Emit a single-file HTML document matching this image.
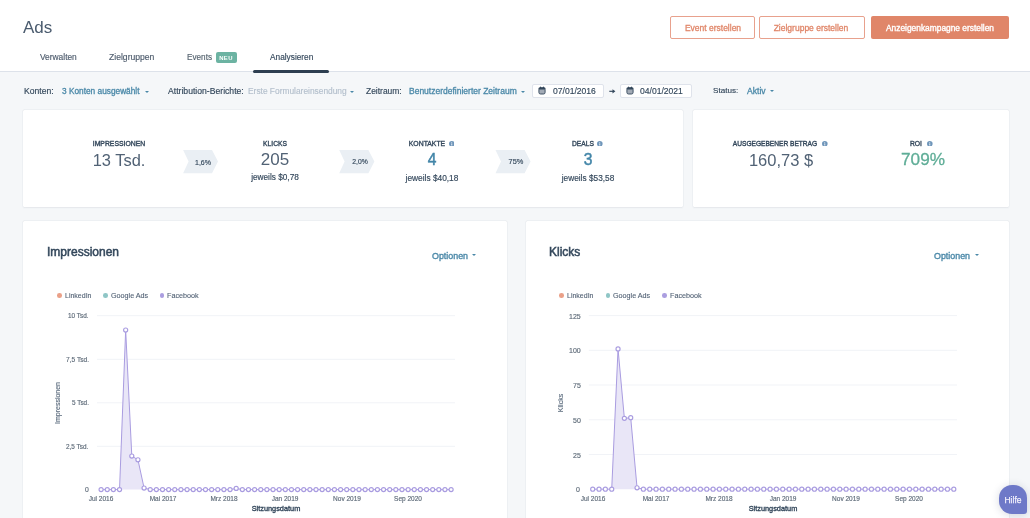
<!DOCTYPE html>
<html><head><meta charset='utf-8'><style>
html,body{margin:0;padding:0;}
body{width:1030px;height:518px;overflow:hidden;position:relative;background:#f5f7f9;font-family:"Liberation Sans",sans-serif;}
.t{position:absolute;line-height:1;white-space:nowrap;will-change:transform;}
.btn{position:absolute;top:16px;height:22.6px;box-sizing:border-box;border:1px solid #e8a18d;border-radius:2px;background:#fff;}
.caret{position:absolute;width:0;height:0;border-left:2.5px solid transparent;border-right:2.5px solid transparent;border-top:2.5px solid #4a88a8;}
.card{position:absolute;background:#fff;border-radius:1.5px;box-shadow:0 0 0 0.5px rgba(45,62,80,0.05),0 0.5px 2px rgba(45,62,80,0.06);}
#hdr{position:absolute;left:0;top:0;width:1030px;height:71px;background:#fff;border-bottom:1px solid #dde2ea;}
</style></head><body>
<div id='hdr'></div>
<div class='t' style='left:23.20px;top:18.58px;font-size:17px;color:#4a5b6e;font-weight:400;'>Ads</div>
<div class='t' style='left:39.60px;top:53.22px;font-size:8.4px;color:#4d5b6c;font-weight:400;-webkit-text-stroke:0.15px #4d5b6c;'>Verwalten</div>
<div class='t' style='left:108.50px;top:53.06px;font-size:8.6px;color:#4d5b6c;font-weight:400;-webkit-text-stroke:0.15px #4d5b6c;'>Zielgruppen</div>
<div class='t' style='left:186.50px;top:53.89px;font-size:8.2px;color:#55636f;font-weight:400;-webkit-text-stroke:0.15px #55636f;'>Events</div>
<div style='position:absolute;left:215.6px;top:52px;width:21.3px;height:11.3px;background:#6cb3a2;border-radius:2px'></div><div class='t' style='left:-73.60px;width:600px;text-align:center;top:55.60px;font-size:5.9px;color:#fff;font-weight:700;letter-spacing:0.35px;'>NEU</div>
<div class='t' style='left:269.60px;top:53.31px;font-size:8.3px;color:#33475b;font-weight:400;-webkit-text-stroke:0.15px #33475b;'>Analysieren</div>
<div style='position:absolute;left:253.2px;top:69.6px;width:76px;height:3px;background:#2d3e50;border-radius:2px'></div><div class='btn' style='left:670.3px;width:84.5px'></div><div class='btn' style='left:759.1px;width:105.5px'></div><div style='position:absolute;left:870.6px;top:16px;width:138.8px;height:22.7px;background:#e08669;border-radius:2px'></div><div class='t' style='left:412.60px;width:600px;text-align:center;top:23.54px;font-size:8.5px;color:#e08669;font-weight:400;-webkit-text-stroke:0.3px #e08669;'>Event erstellen</div>
<div class='t' style='left:511.40px;width:600px;text-align:center;top:23.54px;font-size:8.5px;color:#e08669;font-weight:400;-webkit-text-stroke:0.3px #e08669;'>Zielgruppe erstellen</div>
<div class='t' style='left:640.00px;width:600px;text-align:center;top:23.62px;font-size:8.4px;color:#fff;font-weight:400;-webkit-text-stroke:0.35px #fff;'>Anzeigenkampagne erstellen</div>
<div class='t' style='left:23.50px;top:86.86px;font-size:8.6px;color:#33475b;font-weight:400;-webkit-text-stroke:0.15px #33475b;'>Konten:</div>
<div class='t' style='left:61.50px;top:87.11px;font-size:8.3px;color:#4a88a8;font-weight:400;-webkit-text-stroke:0.3px #4a88a8;'>3 Konten ausgewählt</div>
<div class='caret' style='left:144.6px;top:90.6px;border-top-color:#4a88a8'></div><div class='t' style='left:167.60px;top:86.82px;font-size:8.65px;color:#33475b;font-weight:400;-webkit-text-stroke:0.15px #33475b;'>Attribution-Berichte:</div>
<div class='t' style='left:247.70px;top:87.02px;font-size:8.4px;color:#b3bfcc;font-weight:400;-webkit-text-stroke:0.15px #b3bfcc;'>Erste Formulareinsendung</div>
<div class='caret' style='left:349.8px;top:90.6px;border-top-color:#4a88a8'></div><div class='t' style='left:366.40px;top:86.97px;font-size:8.46px;color:#33475b;font-weight:400;-webkit-text-stroke:0.15px #33475b;'>Zeitraum:</div>
<div class='t' style='left:408.80px;top:86.94px;font-size:8.5px;color:#4a88a8;font-weight:400;-webkit-text-stroke:0.3px #4a88a8;'>Benutzerdefinierter Zeitraum</div>
<div class='caret' style='left:520.5px;top:90.6px;border-top-color:#4a88a8'></div><div style='position:absolute;left:532.1px;top:84.1px;width:72.3px;height:13.7px;box-sizing:border-box;background:#fff;border:1px solid #dfe3eb;border-radius:2px'></div><div class='t' style='left:552.60px;top:86.89px;font-size:8.56px;color:#33475b;font-weight:400;-webkit-text-stroke:0.15px #33475b;'>07/01/2016</div>
<svg style='position:absolute;left:538.0999999999999px;top:85.6px' width='9' height='9' viewBox='0 0 9 9'><rect x='0.9' y='1.8' width='6.2' height='6.2' rx='1.6' fill='#a3abb6' stroke='#33475b' stroke-width='0.9'/><rect x='0.6' y='1.5' width='6.8' height='1.9' rx='0.8' fill='#33475b'/><rect x='2' y='0.5' width='1' height='1.6' rx='0.4' fill='#33475b'/><rect x='5' y='0.5' width='1' height='1.6' rx='0.4' fill='#33475b'/></svg><div style='position:absolute;left:619.6px;top:84.1px;width:72.3px;height:13.7px;box-sizing:border-box;background:#fff;border:1px solid #dfe3eb;border-radius:2px'></div><div class='t' style='left:639.60px;top:86.89px;font-size:8.56px;color:#33475b;font-weight:400;-webkit-text-stroke:0.15px #33475b;'>04/01/2021</div>
<svg style='position:absolute;left:625.5px;top:85.6px' width='9' height='9' viewBox='0 0 9 9'><rect x='0.9' y='1.8' width='6.2' height='6.2' rx='1.6' fill='#a3abb6' stroke='#33475b' stroke-width='0.9'/><rect x='0.6' y='1.5' width='6.8' height='1.9' rx='0.8' fill='#33475b'/><rect x='2' y='0.5' width='1' height='1.6' rx='0.4' fill='#33475b'/><rect x='5' y='0.5' width='1' height='1.6' rx='0.4' fill='#33475b'/></svg><svg style='position:absolute;left:0;top:0;overflow:visible' width='1' height='1'><line x1='609.3' y1='91.3' x2='613.2' y2='91.3' stroke='#33475b' stroke-width='1.15'/><polygon points='612.5,89.2 615.4,91.3 612.5,93.4' fill='#33475b'/></svg><div class='t' style='left:713.20px;top:87.27px;font-size:8.1px;color:#33475b;font-weight:400;-webkit-text-stroke:0.15px #33475b;'>Status:</div>
<div class='t' style='left:747.00px;top:86.86px;font-size:8.6px;color:#4a88a8;font-weight:400;-webkit-text-stroke:0.3px #4a88a8;'>Aktiv</div>
<div class='caret' style='left:769.8px;top:89.8px;border-top-color:#4a88a8'></div><div class='card' style='left:23.3px;top:110px;width:660px;height:97px'></div><div class='card' style='left:692.8px;top:110px;width:316.4px;height:97px'></div><svg style='position:absolute;left:0;top:0;overflow:visible' width='1' height='1'><polygon points='183.1,150 212,150 218,161.6 212,173.2 183.1,173.2 188.6,161.6' fill='#eaeff4'/></svg><svg style='position:absolute;left:0;top:0;overflow:visible' width='1' height='1'><polygon points='339.2,150 368.4,150 374.4,161.6 368.4,173.2 339.2,173.2 344.6,161.6' fill='#eaeff4'/></svg><svg style='position:absolute;left:0;top:0;overflow:visible' width='1' height='1'><polygon points='495.5,150 524.6,150 530.6,161.6 524.6,173.2 495.5,173.2 501,161.6' fill='#eaeff4'/></svg><div class='t' style='left:-96.70px;width:600px;text-align:center;top:158.69px;font-size:7.0px;color:#33475b;font-weight:400;-webkit-text-stroke:0.15px #33475b;'>1,6%</div>
<div class='t' style='left:59.50px;width:600px;text-align:center;top:158.85px;font-size:6.8px;color:#33475b;font-weight:400;-webkit-text-stroke:0.15px #33475b;'>2,0%</div>
<div class='t' style='left:216.10px;width:600px;text-align:center;top:158.35px;font-size:7.4px;color:#33475b;font-weight:400;-webkit-text-stroke:0.15px #33475b;'>75%</div>
<div class='t' style='left:-181.00px;width:600px;text-align:center;top:140.81px;font-size:6.85px;color:#33475b;font-weight:400;-webkit-text-stroke:0.35px #33475b;'>IMPRESSIONEN</div>
<div class='t' style='left:-24.60px;width:600px;text-align:center;top:140.94px;font-size:6.7px;color:#33475b;font-weight:400;-webkit-text-stroke:0.35px #33475b;'>KLICKS</div>
<div class='t' style='left:126.80px;width:600px;text-align:center;top:140.81px;font-size:6.85px;color:#33475b;font-weight:400;-webkit-text-stroke:0.35px #33475b;'>KONTAKTE</div>
<svg style='position:absolute;left:448.8px;top:140.55px' width='5.6' height='5.6' viewBox='0 0 10 10'><circle cx='5' cy='5' r='5' fill='#6f96ba'/><rect x='4.25' y='4.3' width='1.5' height='3.7' fill='#fff'/><circle cx='5' cy='2.7' r='0.85' fill='#fff'/></svg><div class='t' style='left:283.30px;width:600px;text-align:center;top:140.94px;font-size:6.7px;color:#33475b;font-weight:400;-webkit-text-stroke:0.35px #33475b;'>DEALS</div>
<svg style='position:absolute;left:597.4px;top:140.55px' width='5.6' height='5.6' viewBox='0 0 10 10'><circle cx='5' cy='5' r='5' fill='#6f96ba'/><rect x='4.25' y='4.3' width='1.5' height='3.7' fill='#fff'/><circle cx='5' cy='2.7' r='0.85' fill='#fff'/></svg><div class='t' style='left:474.80px;width:600px;text-align:center;top:141.02px;font-size:6.6px;color:#33475b;font-weight:400;-webkit-text-stroke:0.35px #33475b;'>AUSGEGEBENER BETRAG</div>
<svg style='position:absolute;left:822.2px;top:140.55px' width='5.6' height='5.6' viewBox='0 0 10 10'><circle cx='5' cy='5' r='5' fill='#6f96ba'/><rect x='4.25' y='4.3' width='1.5' height='3.7' fill='#fff'/><circle cx='5' cy='2.7' r='0.85' fill='#fff'/></svg><div class='t' style='left:615.50px;width:600px;text-align:center;top:140.89px;font-size:6.75px;color:#33475b;font-weight:400;-webkit-text-stroke:0.35px #33475b;'>ROI</div>
<svg style='position:absolute;left:927.0px;top:140.55px' width='5.6' height='5.6' viewBox='0 0 10 10'><circle cx='5' cy='5' r='5' fill='#6f96ba'/><rect x='4.25' y='4.3' width='1.5' height='3.7' fill='#fff'/><circle cx='5' cy='2.7' r='0.85' fill='#fff'/></svg><div class='t' style='left:-180.80px;width:600px;text-align:center;top:151.84px;font-size:16.45px;color:#516275;font-weight:400;'>13 Tsd.</div>
<div class='t' style='left:-24.80px;width:600px;text-align:center;top:151.38px;font-size:17px;color:#516275;font-weight:400;'>205</div>
<div class='t' style='left:131.70px;width:600px;text-align:center;top:152.44px;font-size:15.6px;color:#4285a8;font-weight:400;-webkit-text-stroke:0.45px #4285a8;'>4</div>
<div class='t' style='left:288.20px;width:600px;text-align:center;top:152.44px;font-size:15.6px;color:#4285a8;font-weight:400;-webkit-text-stroke:0.45px #4285a8;'>3</div>
<div class='t' style='left:481.00px;width:600px;text-align:center;top:151.80px;font-size:16.5px;color:#516275;font-weight:400;'>160,73 $</div>
<div class='t' style='left:622.80px;width:600px;text-align:center;top:151.22px;font-size:17.2px;color:#5fad97;font-weight:400;-webkit-text-stroke:0.3px #5fad97;'>709%</div>
<div class='t' style='left:-24.60px;width:600px;text-align:center;top:173.74px;font-size:8.26px;color:#33475b;font-weight:400;-webkit-text-stroke:0.15px #33475b;'>jeweils $0,78</div>
<div class='t' style='left:131.80px;width:600px;text-align:center;top:173.67px;font-size:8.34px;color:#33475b;font-weight:400;-webkit-text-stroke:0.15px #33475b;'>jeweils $40,18</div>
<div class='t' style='left:288.10px;width:600px;text-align:center;top:173.71px;font-size:8.3px;color:#33475b;font-weight:400;-webkit-text-stroke:0.15px #33475b;'>jeweils $53,58</div>
<div class='card' style='left:23.2px;top:221px;width:483.8px;height:320px'></div><div class='card' style='left:525.9px;top:221px;width:483.5px;height:320px'></div><div class='t' style='left:47.20px;top:246.33px;font-size:12.0px;color:#33475b;font-weight:400;-webkit-text-stroke:0.5px #33475b;'>Impressionen</div>
<div class='t' style='left:432.20px;top:252.01px;font-size:8.9px;color:#4a88a8;font-weight:400;-webkit-text-stroke:0.35px #4a88a8;'>Optionen</div>
<div class='caret' style='left:472.4px;top:254.4px;border-top-color:#4a88a8'></div><div style='position:absolute;left:57.1px;top:293.3px;width:4.7px;height:4.7px;border-radius:50%;background:#eaa088'></div><div class='t' style='left:64.70px;top:292.39px;font-size:7.0px;color:#4f5f72;font-weight:400;-webkit-text-stroke:0.1px #4f5f72;'>LinkedIn</div>
<div style='position:absolute;left:103.4px;top:293.3px;width:4.7px;height:4.7px;border-radius:50%;background:#8fc6c6'></div><div class='t' style='left:111.00px;top:292.22px;font-size:7.2px;color:#4f5f72;font-weight:400;-webkit-text-stroke:0.1px #4f5f72;'>Google Ads</div>
<div style='position:absolute;left:159.8px;top:293.3px;width:4.7px;height:4.7px;border-radius:50%;background:#ab9ee0'></div><div class='t' style='left:167.40px;top:292.22px;font-size:7.2px;color:#4f5f72;font-weight:400;-webkit-text-stroke:0.1px #4f5f72;'>Facebook</div>
<svg style='position:absolute;left:0;top:0' width='1030' height='518'><line x1='97' y1='315.7' x2='455' y2='315.7' stroke='#f1f3f7' stroke-width='1'/><line x1='97' y1='359.3' x2='455' y2='359.3' stroke='#f1f3f7' stroke-width='1'/><line x1='97' y1='402.8' x2='455' y2='402.8' stroke='#f1f3f7' stroke-width='1'/><line x1='97' y1='446.3' x2='455' y2='446.3' stroke='#f1f3f7' stroke-width='1'/><polygon points='101.1,489.6 101.10,489.60 107.24,489.60 113.38,489.60 119.52,489.60 125.66,330.06 131.80,456.07 137.94,459.78 144.08,488.03 150.22,489.60 156.36,489.60 162.50,489.60 168.64,489.60 174.78,489.60 180.92,489.60 187.06,489.60 193.21,489.60 199.35,489.60 205.49,489.60 211.63,489.60 217.77,489.60 223.91,489.60 230.05,489.60 236.19,488.38 242.33,489.60 248.47,489.60 254.61,489.60 260.75,489.60 266.89,489.60 273.03,489.60 279.17,489.60 285.31,489.60 291.45,489.60 297.59,489.60 303.73,489.60 309.87,489.60 316.01,489.60 322.15,489.60 328.29,489.60 334.43,489.60 340.57,489.60 346.71,489.60 352.85,489.60 358.99,489.60 365.14,489.60 371.28,489.60 377.42,489.60 383.56,489.60 389.70,489.60 395.84,489.60 401.98,489.60 408.12,489.60 414.26,489.60 420.40,489.60 426.54,489.60 432.68,489.60 438.82,489.60 444.96,489.60 451.10,489.60 451.1,489.6' fill='#e9e6f7'/><polyline points='101.10,489.60 107.24,489.60 113.38,489.60 119.52,489.60 125.66,330.06 131.80,456.07 137.94,459.78 144.08,488.03 150.22,489.60 156.36,489.60 162.50,489.60 168.64,489.60 174.78,489.60 180.92,489.60 187.06,489.60 193.21,489.60 199.35,489.60 205.49,489.60 211.63,489.60 217.77,489.60 223.91,489.60 230.05,489.60 236.19,488.38 242.33,489.60 248.47,489.60 254.61,489.60 260.75,489.60 266.89,489.60 273.03,489.60 279.17,489.60 285.31,489.60 291.45,489.60 297.59,489.60 303.73,489.60 309.87,489.60 316.01,489.60 322.15,489.60 328.29,489.60 334.43,489.60 340.57,489.60 346.71,489.60 352.85,489.60 358.99,489.60 365.14,489.60 371.28,489.60 377.42,489.60 383.56,489.60 389.70,489.60 395.84,489.60 401.98,489.60 408.12,489.60 414.26,489.60 420.40,489.60 426.54,489.60 432.68,489.60 438.82,489.60 444.96,489.60 451.10,489.60' fill='none' stroke='#a99ce0' stroke-width='1'/><circle cx='101.10' cy='489.60' r='2.05' fill='#fff' stroke='#a99ce0' stroke-width='1.15'/><circle cx='107.24' cy='489.60' r='2.05' fill='#fff' stroke='#a99ce0' stroke-width='1.15'/><circle cx='113.38' cy='489.60' r='2.05' fill='#fff' stroke='#a99ce0' stroke-width='1.15'/><circle cx='119.52' cy='489.60' r='2.05' fill='#fff' stroke='#a99ce0' stroke-width='1.15'/><circle cx='125.66' cy='330.06' r='2.05' fill='#fff' stroke='#a99ce0' stroke-width='1.15'/><circle cx='131.80' cy='456.07' r='2.05' fill='#fff' stroke='#a99ce0' stroke-width='1.15'/><circle cx='137.94' cy='459.78' r='2.05' fill='#fff' stroke='#a99ce0' stroke-width='1.15'/><circle cx='144.08' cy='488.03' r='2.05' fill='#fff' stroke='#a99ce0' stroke-width='1.15'/><circle cx='150.22' cy='489.60' r='2.05' fill='#fff' stroke='#a99ce0' stroke-width='1.15'/><circle cx='156.36' cy='489.60' r='2.05' fill='#fff' stroke='#a99ce0' stroke-width='1.15'/><circle cx='162.50' cy='489.60' r='2.05' fill='#fff' stroke='#a99ce0' stroke-width='1.15'/><circle cx='168.64' cy='489.60' r='2.05' fill='#fff' stroke='#a99ce0' stroke-width='1.15'/><circle cx='174.78' cy='489.60' r='2.05' fill='#fff' stroke='#a99ce0' stroke-width='1.15'/><circle cx='180.92' cy='489.60' r='2.05' fill='#fff' stroke='#a99ce0' stroke-width='1.15'/><circle cx='187.06' cy='489.60' r='2.05' fill='#fff' stroke='#a99ce0' stroke-width='1.15'/><circle cx='193.21' cy='489.60' r='2.05' fill='#fff' stroke='#a99ce0' stroke-width='1.15'/><circle cx='199.35' cy='489.60' r='2.05' fill='#fff' stroke='#a99ce0' stroke-width='1.15'/><circle cx='205.49' cy='489.60' r='2.05' fill='#fff' stroke='#a99ce0' stroke-width='1.15'/><circle cx='211.63' cy='489.60' r='2.05' fill='#fff' stroke='#a99ce0' stroke-width='1.15'/><circle cx='217.77' cy='489.60' r='2.05' fill='#fff' stroke='#a99ce0' stroke-width='1.15'/><circle cx='223.91' cy='489.60' r='2.05' fill='#fff' stroke='#a99ce0' stroke-width='1.15'/><circle cx='230.05' cy='489.60' r='2.05' fill='#fff' stroke='#a99ce0' stroke-width='1.15'/><circle cx='236.19' cy='488.38' r='2.05' fill='#fff' stroke='#a99ce0' stroke-width='1.15'/><circle cx='242.33' cy='489.60' r='2.05' fill='#fff' stroke='#a99ce0' stroke-width='1.15'/><circle cx='248.47' cy='489.60' r='2.05' fill='#fff' stroke='#a99ce0' stroke-width='1.15'/><circle cx='254.61' cy='489.60' r='2.05' fill='#fff' stroke='#a99ce0' stroke-width='1.15'/><circle cx='260.75' cy='489.60' r='2.05' fill='#fff' stroke='#a99ce0' stroke-width='1.15'/><circle cx='266.89' cy='489.60' r='2.05' fill='#fff' stroke='#a99ce0' stroke-width='1.15'/><circle cx='273.03' cy='489.60' r='2.05' fill='#fff' stroke='#a99ce0' stroke-width='1.15'/><circle cx='279.17' cy='489.60' r='2.05' fill='#fff' stroke='#a99ce0' stroke-width='1.15'/><circle cx='285.31' cy='489.60' r='2.05' fill='#fff' stroke='#a99ce0' stroke-width='1.15'/><circle cx='291.45' cy='489.60' r='2.05' fill='#fff' stroke='#a99ce0' stroke-width='1.15'/><circle cx='297.59' cy='489.60' r='2.05' fill='#fff' stroke='#a99ce0' stroke-width='1.15'/><circle cx='303.73' cy='489.60' r='2.05' fill='#fff' stroke='#a99ce0' stroke-width='1.15'/><circle cx='309.87' cy='489.60' r='2.05' fill='#fff' stroke='#a99ce0' stroke-width='1.15'/><circle cx='316.01' cy='489.60' r='2.05' fill='#fff' stroke='#a99ce0' stroke-width='1.15'/><circle cx='322.15' cy='489.60' r='2.05' fill='#fff' stroke='#a99ce0' stroke-width='1.15'/><circle cx='328.29' cy='489.60' r='2.05' fill='#fff' stroke='#a99ce0' stroke-width='1.15'/><circle cx='334.43' cy='489.60' r='2.05' fill='#fff' stroke='#a99ce0' stroke-width='1.15'/><circle cx='340.57' cy='489.60' r='2.05' fill='#fff' stroke='#a99ce0' stroke-width='1.15'/><circle cx='346.71' cy='489.60' r='2.05' fill='#fff' stroke='#a99ce0' stroke-width='1.15'/><circle cx='352.85' cy='489.60' r='2.05' fill='#fff' stroke='#a99ce0' stroke-width='1.15'/><circle cx='358.99' cy='489.60' r='2.05' fill='#fff' stroke='#a99ce0' stroke-width='1.15'/><circle cx='365.14' cy='489.60' r='2.05' fill='#fff' stroke='#a99ce0' stroke-width='1.15'/><circle cx='371.28' cy='489.60' r='2.05' fill='#fff' stroke='#a99ce0' stroke-width='1.15'/><circle cx='377.42' cy='489.60' r='2.05' fill='#fff' stroke='#a99ce0' stroke-width='1.15'/><circle cx='383.56' cy='489.60' r='2.05' fill='#fff' stroke='#a99ce0' stroke-width='1.15'/><circle cx='389.70' cy='489.60' r='2.05' fill='#fff' stroke='#a99ce0' stroke-width='1.15'/><circle cx='395.84' cy='489.60' r='2.05' fill='#fff' stroke='#a99ce0' stroke-width='1.15'/><circle cx='401.98' cy='489.60' r='2.05' fill='#fff' stroke='#a99ce0' stroke-width='1.15'/><circle cx='408.12' cy='489.60' r='2.05' fill='#fff' stroke='#a99ce0' stroke-width='1.15'/><circle cx='414.26' cy='489.60' r='2.05' fill='#fff' stroke='#a99ce0' stroke-width='1.15'/><circle cx='420.40' cy='489.60' r='2.05' fill='#fff' stroke='#a99ce0' stroke-width='1.15'/><circle cx='426.54' cy='489.60' r='2.05' fill='#fff' stroke='#a99ce0' stroke-width='1.15'/><circle cx='432.68' cy='489.60' r='2.05' fill='#fff' stroke='#a99ce0' stroke-width='1.15'/><circle cx='438.82' cy='489.60' r='2.05' fill='#fff' stroke='#a99ce0' stroke-width='1.15'/><circle cx='444.96' cy='489.60' r='2.05' fill='#fff' stroke='#a99ce0' stroke-width='1.15'/><circle cx='451.10' cy='489.60' r='2.05' fill='#fff' stroke='#a99ce0' stroke-width='1.15'/></svg><div class='t' style='right:941.40px;top:313.38px;font-size:6.4px;color:#5d6a78;font-weight:400;-webkit-text-stroke:0.15px #5d6a78;'>10 Tsd.</div>
<div class='t' style='right:941.40px;top:356.82px;font-size:6.6px;color:#5d6a78;font-weight:400;-webkit-text-stroke:0.15px #5d6a78;'>7,5 Tsd.</div>
<div class='t' style='right:941.40px;top:400.48px;font-size:6.4px;color:#5d6a78;font-weight:400;-webkit-text-stroke:0.15px #5d6a78;'>5 Tsd.</div>
<div class='t' style='right:941.40px;top:443.98px;font-size:6.4px;color:#5d6a78;font-weight:400;-webkit-text-stroke:0.15px #5d6a78;'>2,5 Tsd.</div>
<div class='t' style='right:941.40px;top:486.95px;font-size:6.8px;color:#5d6a78;font-weight:400;-webkit-text-stroke:0.15px #5d6a78;'>0</div>
<div class='t' style='left:-198.90px;width:600px;text-align:center;top:495.80px;font-size:6.5px;color:#5d6a78;font-weight:400;-webkit-text-stroke:0.15px #5d6a78;'>Jul 2016</div>
<div class='t' style='left:-137.50px;width:600px;text-align:center;top:495.80px;font-size:6.5px;color:#5d6a78;font-weight:400;-webkit-text-stroke:0.15px #5d6a78;'>Mai 2017</div>
<div class='t' style='left:-76.09px;width:600px;text-align:center;top:495.80px;font-size:6.5px;color:#5d6a78;font-weight:400;-webkit-text-stroke:0.15px #5d6a78;'>Mrz 2018</div>
<div class='t' style='left:-14.69px;width:600px;text-align:center;top:495.80px;font-size:6.5px;color:#5d6a78;font-weight:400;-webkit-text-stroke:0.15px #5d6a78;'>Jan 2019</div>
<div class='t' style='left:46.71px;width:600px;text-align:center;top:495.80px;font-size:6.5px;color:#5d6a78;font-weight:400;-webkit-text-stroke:0.15px #5d6a78;'>Nov 2019</div>
<div class='t' style='left:108.12px;width:600px;text-align:center;top:495.80px;font-size:6.5px;color:#5d6a78;font-weight:400;-webkit-text-stroke:0.15px #5d6a78;'>Sep 2020</div>
<div class='t' style='left:-24.00px;width:600px;text-align:center;top:505.30px;font-size:7.35px;color:#33475b;font-weight:400;-webkit-text-stroke:0.35px #33475b;'>Sitzungsdatum</div>
<div class='t' style='left:-91.8px;top:398.5px;width:300px;text-align:center;font-size:7px;color:#5b6b7d;transform:rotate(-90deg);transform-origin:150px 4px;-webkit-text-stroke:0.15px #5b6b7d'>Impressionen</div><div class='t' style='left:549.30px;top:246.33px;font-size:12.0px;color:#33475b;font-weight:400;-webkit-text-stroke:0.5px #33475b;'>Klicks</div>
<div class='t' style='left:934.40px;top:252.01px;font-size:8.9px;color:#4a88a8;font-weight:400;-webkit-text-stroke:0.35px #4a88a8;'>Optionen</div>
<div class='caret' style='left:974.6px;top:254.4px;border-top-color:#4a88a8'></div><div style='position:absolute;left:559.4px;top:293.3px;width:4.7px;height:4.7px;border-radius:50%;background:#eaa088'></div><div class='t' style='left:567.00px;top:292.39px;font-size:7.0px;color:#4f5f72;font-weight:400;-webkit-text-stroke:0.1px #4f5f72;'>LinkedIn</div>
<div style='position:absolute;left:605.6999999999999px;top:293.3px;width:4.7px;height:4.7px;border-radius:50%;background:#8fc6c6'></div><div class='t' style='left:613.30px;top:292.22px;font-size:7.2px;color:#4f5f72;font-weight:400;-webkit-text-stroke:0.1px #4f5f72;'>Google Ads</div>
<div style='position:absolute;left:662.1px;top:293.3px;width:4.7px;height:4.7px;border-radius:50%;background:#ab9ee0'></div><div class='t' style='left:669.70px;top:292.22px;font-size:7.2px;color:#4f5f72;font-weight:400;-webkit-text-stroke:0.1px #4f5f72;'>Facebook</div>
<svg style='position:absolute;left:0;top:0' width='1030' height='518'><line x1='588.8' y1='315.6' x2='957' y2='315.6' stroke='#f1f3f7' stroke-width='1'/><line x1='588.8' y1='350.3' x2='957' y2='350.3' stroke='#f1f3f7' stroke-width='1'/><line x1='588.8' y1='385.0' x2='957' y2='385.0' stroke='#f1f3f7' stroke-width='1'/><line x1='588.8' y1='419.8' x2='957' y2='419.8' stroke='#f1f3f7' stroke-width='1'/><line x1='588.8' y1='454.5' x2='957' y2='454.5' stroke='#f1f3f7' stroke-width='1'/><polygon points='592.7,489.2 592.70,489.20 599.04,489.20 605.37,489.20 611.71,489.20 618.04,348.93 624.38,418.37 630.71,417.68 637.05,487.81 643.38,489.20 649.72,489.20 656.05,489.20 662.39,489.20 668.72,489.20 675.06,489.20 681.39,489.20 687.73,489.20 694.06,489.20 700.40,489.20 706.73,489.20 713.07,489.20 719.40,489.20 725.74,489.20 732.07,489.20 738.41,489.20 744.74,489.20 751.08,489.20 757.41,489.20 763.75,489.20 770.08,489.20 776.42,489.20 782.75,489.20 789.09,489.20 795.42,489.20 801.76,489.20 808.09,489.20 814.43,489.20 820.76,489.20 827.10,489.20 833.43,489.20 839.77,489.20 846.10,489.20 852.44,489.20 858.77,489.20 865.11,489.20 871.44,489.20 877.78,489.20 884.11,489.20 890.45,489.20 896.78,489.20 903.12,489.20 909.45,489.20 915.79,489.20 922.12,489.20 928.46,489.20 934.79,489.20 941.13,489.20 947.46,489.20 953.80,489.20 953.8,489.2' fill='#e9e6f7'/><polyline points='592.70,489.20 599.04,489.20 605.37,489.20 611.71,489.20 618.04,348.93 624.38,418.37 630.71,417.68 637.05,487.81 643.38,489.20 649.72,489.20 656.05,489.20 662.39,489.20 668.72,489.20 675.06,489.20 681.39,489.20 687.73,489.20 694.06,489.20 700.40,489.20 706.73,489.20 713.07,489.20 719.40,489.20 725.74,489.20 732.07,489.20 738.41,489.20 744.74,489.20 751.08,489.20 757.41,489.20 763.75,489.20 770.08,489.20 776.42,489.20 782.75,489.20 789.09,489.20 795.42,489.20 801.76,489.20 808.09,489.20 814.43,489.20 820.76,489.20 827.10,489.20 833.43,489.20 839.77,489.20 846.10,489.20 852.44,489.20 858.77,489.20 865.11,489.20 871.44,489.20 877.78,489.20 884.11,489.20 890.45,489.20 896.78,489.20 903.12,489.20 909.45,489.20 915.79,489.20 922.12,489.20 928.46,489.20 934.79,489.20 941.13,489.20 947.46,489.20 953.80,489.20' fill='none' stroke='#a99ce0' stroke-width='1'/><circle cx='592.70' cy='489.20' r='2.05' fill='#fff' stroke='#a99ce0' stroke-width='1.15'/><circle cx='599.04' cy='489.20' r='2.05' fill='#fff' stroke='#a99ce0' stroke-width='1.15'/><circle cx='605.37' cy='489.20' r='2.05' fill='#fff' stroke='#a99ce0' stroke-width='1.15'/><circle cx='611.71' cy='489.20' r='2.05' fill='#fff' stroke='#a99ce0' stroke-width='1.15'/><circle cx='618.04' cy='348.93' r='2.05' fill='#fff' stroke='#a99ce0' stroke-width='1.15'/><circle cx='624.38' cy='418.37' r='2.05' fill='#fff' stroke='#a99ce0' stroke-width='1.15'/><circle cx='630.71' cy='417.68' r='2.05' fill='#fff' stroke='#a99ce0' stroke-width='1.15'/><circle cx='637.05' cy='487.81' r='2.05' fill='#fff' stroke='#a99ce0' stroke-width='1.15'/><circle cx='643.38' cy='489.20' r='2.05' fill='#fff' stroke='#a99ce0' stroke-width='1.15'/><circle cx='649.72' cy='489.20' r='2.05' fill='#fff' stroke='#a99ce0' stroke-width='1.15'/><circle cx='656.05' cy='489.20' r='2.05' fill='#fff' stroke='#a99ce0' stroke-width='1.15'/><circle cx='662.39' cy='489.20' r='2.05' fill='#fff' stroke='#a99ce0' stroke-width='1.15'/><circle cx='668.72' cy='489.20' r='2.05' fill='#fff' stroke='#a99ce0' stroke-width='1.15'/><circle cx='675.06' cy='489.20' r='2.05' fill='#fff' stroke='#a99ce0' stroke-width='1.15'/><circle cx='681.39' cy='489.20' r='2.05' fill='#fff' stroke='#a99ce0' stroke-width='1.15'/><circle cx='687.73' cy='489.20' r='2.05' fill='#fff' stroke='#a99ce0' stroke-width='1.15'/><circle cx='694.06' cy='489.20' r='2.05' fill='#fff' stroke='#a99ce0' stroke-width='1.15'/><circle cx='700.40' cy='489.20' r='2.05' fill='#fff' stroke='#a99ce0' stroke-width='1.15'/><circle cx='706.73' cy='489.20' r='2.05' fill='#fff' stroke='#a99ce0' stroke-width='1.15'/><circle cx='713.07' cy='489.20' r='2.05' fill='#fff' stroke='#a99ce0' stroke-width='1.15'/><circle cx='719.40' cy='489.20' r='2.05' fill='#fff' stroke='#a99ce0' stroke-width='1.15'/><circle cx='725.74' cy='489.20' r='2.05' fill='#fff' stroke='#a99ce0' stroke-width='1.15'/><circle cx='732.07' cy='489.20' r='2.05' fill='#fff' stroke='#a99ce0' stroke-width='1.15'/><circle cx='738.41' cy='489.20' r='2.05' fill='#fff' stroke='#a99ce0' stroke-width='1.15'/><circle cx='744.74' cy='489.20' r='2.05' fill='#fff' stroke='#a99ce0' stroke-width='1.15'/><circle cx='751.08' cy='489.20' r='2.05' fill='#fff' stroke='#a99ce0' stroke-width='1.15'/><circle cx='757.41' cy='489.20' r='2.05' fill='#fff' stroke='#a99ce0' stroke-width='1.15'/><circle cx='763.75' cy='489.20' r='2.05' fill='#fff' stroke='#a99ce0' stroke-width='1.15'/><circle cx='770.08' cy='489.20' r='2.05' fill='#fff' stroke='#a99ce0' stroke-width='1.15'/><circle cx='776.42' cy='489.20' r='2.05' fill='#fff' stroke='#a99ce0' stroke-width='1.15'/><circle cx='782.75' cy='489.20' r='2.05' fill='#fff' stroke='#a99ce0' stroke-width='1.15'/><circle cx='789.09' cy='489.20' r='2.05' fill='#fff' stroke='#a99ce0' stroke-width='1.15'/><circle cx='795.42' cy='489.20' r='2.05' fill='#fff' stroke='#a99ce0' stroke-width='1.15'/><circle cx='801.76' cy='489.20' r='2.05' fill='#fff' stroke='#a99ce0' stroke-width='1.15'/><circle cx='808.09' cy='489.20' r='2.05' fill='#fff' stroke='#a99ce0' stroke-width='1.15'/><circle cx='814.43' cy='489.20' r='2.05' fill='#fff' stroke='#a99ce0' stroke-width='1.15'/><circle cx='820.76' cy='489.20' r='2.05' fill='#fff' stroke='#a99ce0' stroke-width='1.15'/><circle cx='827.10' cy='489.20' r='2.05' fill='#fff' stroke='#a99ce0' stroke-width='1.15'/><circle cx='833.43' cy='489.20' r='2.05' fill='#fff' stroke='#a99ce0' stroke-width='1.15'/><circle cx='839.77' cy='489.20' r='2.05' fill='#fff' stroke='#a99ce0' stroke-width='1.15'/><circle cx='846.10' cy='489.20' r='2.05' fill='#fff' stroke='#a99ce0' stroke-width='1.15'/><circle cx='852.44' cy='489.20' r='2.05' fill='#fff' stroke='#a99ce0' stroke-width='1.15'/><circle cx='858.77' cy='489.20' r='2.05' fill='#fff' stroke='#a99ce0' stroke-width='1.15'/><circle cx='865.11' cy='489.20' r='2.05' fill='#fff' stroke='#a99ce0' stroke-width='1.15'/><circle cx='871.44' cy='489.20' r='2.05' fill='#fff' stroke='#a99ce0' stroke-width='1.15'/><circle cx='877.78' cy='489.20' r='2.05' fill='#fff' stroke='#a99ce0' stroke-width='1.15'/><circle cx='884.11' cy='489.20' r='2.05' fill='#fff' stroke='#a99ce0' stroke-width='1.15'/><circle cx='890.45' cy='489.20' r='2.05' fill='#fff' stroke='#a99ce0' stroke-width='1.15'/><circle cx='896.78' cy='489.20' r='2.05' fill='#fff' stroke='#a99ce0' stroke-width='1.15'/><circle cx='903.12' cy='489.20' r='2.05' fill='#fff' stroke='#a99ce0' stroke-width='1.15'/><circle cx='909.45' cy='489.20' r='2.05' fill='#fff' stroke='#a99ce0' stroke-width='1.15'/><circle cx='915.79' cy='489.20' r='2.05' fill='#fff' stroke='#a99ce0' stroke-width='1.15'/><circle cx='922.12' cy='489.20' r='2.05' fill='#fff' stroke='#a99ce0' stroke-width='1.15'/><circle cx='928.46' cy='489.20' r='2.05' fill='#fff' stroke='#a99ce0' stroke-width='1.15'/><circle cx='934.79' cy='489.20' r='2.05' fill='#fff' stroke='#a99ce0' stroke-width='1.15'/><circle cx='941.13' cy='489.20' r='2.05' fill='#fff' stroke='#a99ce0' stroke-width='1.15'/><circle cx='947.46' cy='489.20' r='2.05' fill='#fff' stroke='#a99ce0' stroke-width='1.15'/><circle cx='953.80' cy='489.20' r='2.05' fill='#fff' stroke='#a99ce0' stroke-width='1.15'/></svg><div class='t' style='right:449.70px;top:312.79px;font-size:7.0px;color:#5d6a78;font-weight:400;-webkit-text-stroke:0.15px #5d6a78;'>125</div>
<div class='t' style='right:449.70px;top:347.49px;font-size:7.0px;color:#5d6a78;font-weight:400;-webkit-text-stroke:0.15px #5d6a78;'>100</div>
<div class='t' style='right:449.70px;top:382.19px;font-size:7.0px;color:#5d6a78;font-weight:400;-webkit-text-stroke:0.15px #5d6a78;'>75</div>
<div class='t' style='right:449.70px;top:416.99px;font-size:7.0px;color:#5d6a78;font-weight:400;-webkit-text-stroke:0.15px #5d6a78;'>50</div>
<div class='t' style='right:449.70px;top:451.69px;font-size:7.0px;color:#5d6a78;font-weight:400;-webkit-text-stroke:0.15px #5d6a78;'>25</div>
<div class='t' style='right:449.70px;top:486.39px;font-size:7.0px;color:#5d6a78;font-weight:400;-webkit-text-stroke:0.15px #5d6a78;'>0</div>
<div class='t' style='left:292.70px;width:600px;text-align:center;top:495.80px;font-size:6.5px;color:#5d6a78;font-weight:400;-webkit-text-stroke:0.15px #5d6a78;'>Jul 2016</div>
<div class='t' style='left:356.05px;width:600px;text-align:center;top:495.80px;font-size:6.5px;color:#5d6a78;font-weight:400;-webkit-text-stroke:0.15px #5d6a78;'>Mai 2017</div>
<div class='t' style='left:419.40px;width:600px;text-align:center;top:495.80px;font-size:6.5px;color:#5d6a78;font-weight:400;-webkit-text-stroke:0.15px #5d6a78;'>Mrz 2018</div>
<div class='t' style='left:482.75px;width:600px;text-align:center;top:495.80px;font-size:6.5px;color:#5d6a78;font-weight:400;-webkit-text-stroke:0.15px #5d6a78;'>Jan 2019</div>
<div class='t' style='left:546.10px;width:600px;text-align:center;top:495.80px;font-size:6.5px;color:#5d6a78;font-weight:400;-webkit-text-stroke:0.15px #5d6a78;'>Nov 2019</div>
<div class='t' style='left:609.45px;width:600px;text-align:center;top:495.80px;font-size:6.5px;color:#5d6a78;font-weight:400;-webkit-text-stroke:0.15px #5d6a78;'>Sep 2020</div>
<div class='t' style='left:472.90px;width:600px;text-align:center;top:505.30px;font-size:7.35px;color:#33475b;font-weight:400;-webkit-text-stroke:0.35px #33475b;'>Sitzungsdatum</div>
<div class='t' style='left:411.29999999999995px;top:398.5px;width:300px;text-align:center;font-size:7px;color:#5b6b7d;transform:rotate(-90deg);transform-origin:150px 4px;-webkit-text-stroke:0.15px #5b6b7d'>Klicks</div><div style='position:absolute;left:998.7px;top:485px;width:28.7px;height:29.2px;background:#6e79c8;border-radius:13px 13px 3px 13px;box-shadow:0 1px 8px rgba(40,50,90,0.18)'></div><div class='t' style='left:713.20px;width:600px;text-align:center;top:496.14px;font-size:8.5px;color:#f4f2fc;font-weight:400;-webkit-text-stroke:0.25px #f4f2fc;'>Hilfe</div>

</body></html>
